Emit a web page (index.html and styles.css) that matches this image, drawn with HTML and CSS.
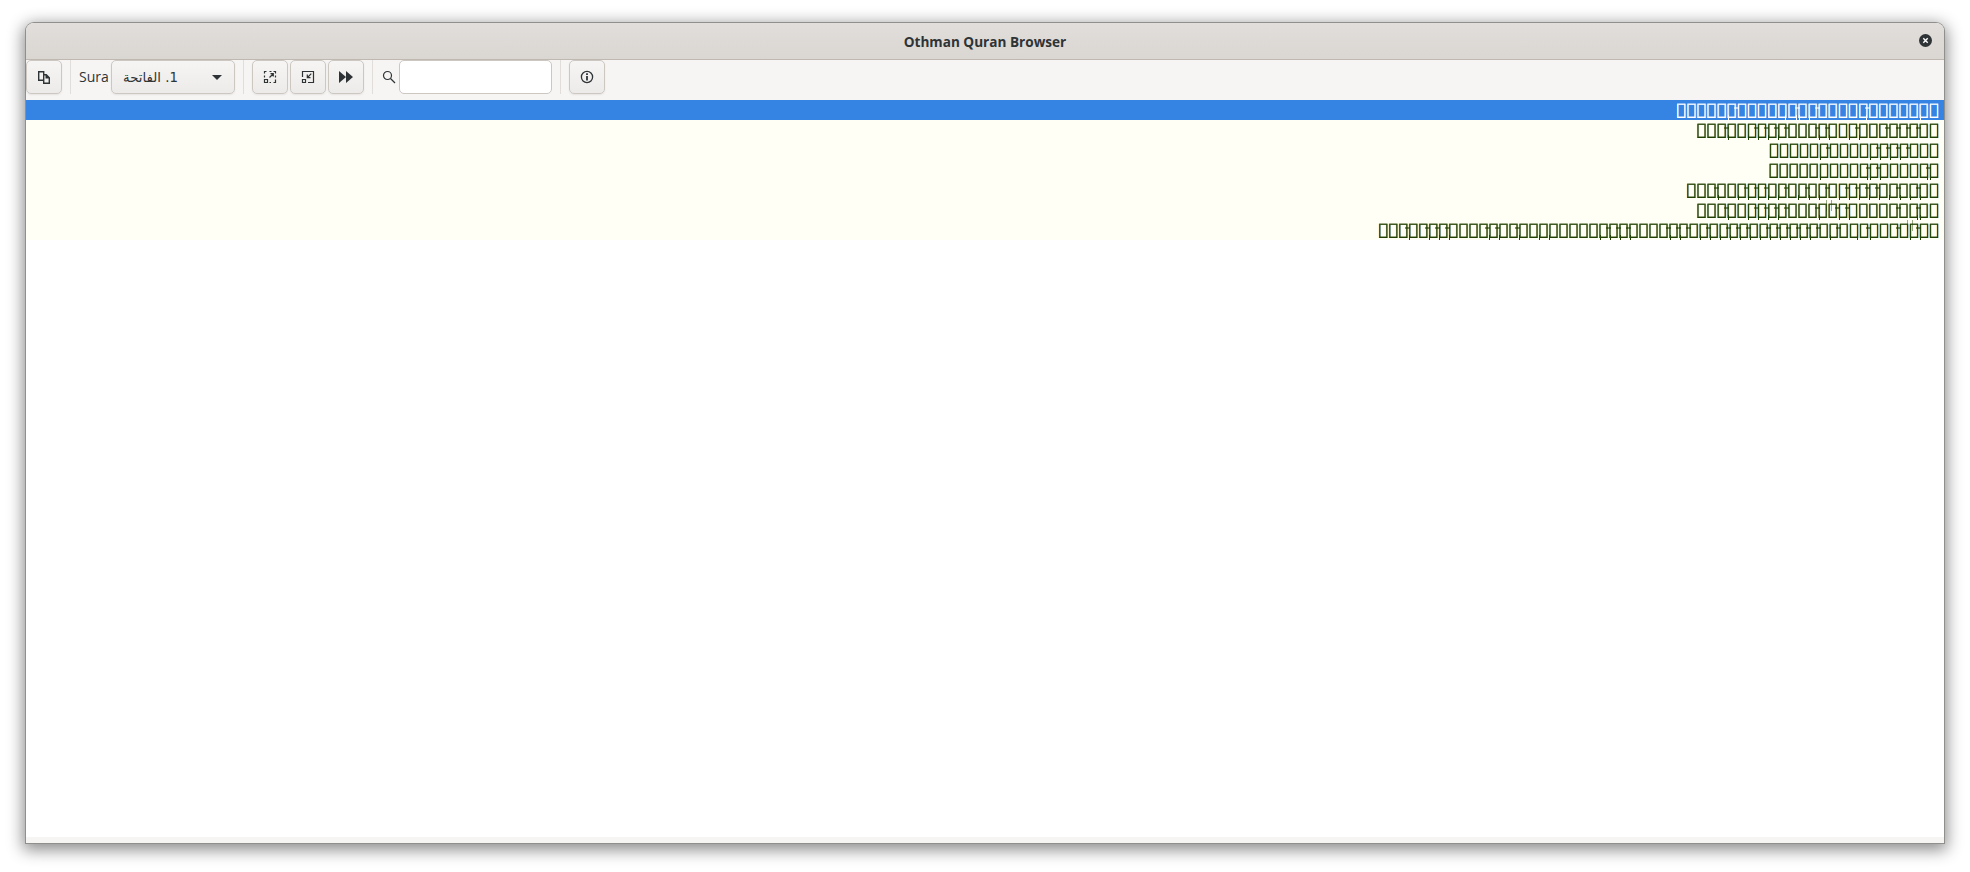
FILE: index.html
```html
<!DOCTYPE html>
<html lang="en">
<head>
<meta charset="utf-8">
<title>Othman Quran Browser</title>
<link rel="stylesheet" href="styles.css">
</head>
<body>
<div class="window">
  <header class="titlebar">
    <span class="title">Othman Quran Browser</span>
    <span class="close"><svg viewBox="0 0 13 13" width="13" height="13"><path d="M4.300 4.300l4.400 4.400M8.700 4.300l-4.400 4.400" stroke="#fff" stroke-width="1.400" fill="none"/></svg></span>
  </header>
  <nav class="toolbar">
    <button class="btn"><svg class="ico" viewBox="0 0 14 14"><path d="M1.700 1.700h5v8.600h-5zM6.700 4.700h2.600l3 3v5.600H6.700z" fill="none" stroke="#2e3436" stroke-width="1.400"/><path d="M8.500 4v4.500H13z" fill="#2e3436"/></svg></button>
    <span class="sep"></span>
    <span class="label">Sura</span>
    <button class="combo"><span class="combo-text" dir="rtl">1. الفاتحة</span><span class="arrow"></span></button>
    <span class="sep"></span>
    <button class="btn"><svg class="ico" viewBox="0 0 14 14"><path d="M1.500 9.500h3v3h-3z" fill="none" stroke="#2e3436" stroke-width="1.200"/><path d="M6.500 1.500h2M10.500 1.500h2v2M12.500 5.500v2M12.500 9.500v3h-2M8 12.500H6.500M1.500 7.500v-2M1.500 3.500v-2h2" fill="none" stroke="#2e3436" stroke-width="1.200"/><path d="M6.500 7.500L10 4M7.500 3.700h2.800v2.800" fill="none" stroke="#2e3436" stroke-width="1.200"/></svg></button>
    <button class="btn tight"><svg class="ico" viewBox="0 0 14 14"><path d="M1.500 9.500h3v3h-3z" fill="none" stroke="#2e3436" stroke-width="1.200"/><path d="M1.500 7V1.500h11v11H7" fill="none" stroke="#2e3436" stroke-width="1.200"/><path d="M10.300 3.700L6.500 7.500M6.300 4.500v3.200h3.200" fill="none" stroke="#2e3436" stroke-width="1.200"/></svg></button>
    <button class="btn tight"><svg class="ico" viewBox="0 0 14 14"><path d="M0 1l7 6-7 6zM7 1l7 6-7 6z" fill="#2e3436"/></svg></button>
    <span class="sep"></span>
    <svg class="search" viewBox="0 0 14 14"><circle cx="5.500" cy="5.500" r="4" fill="none" stroke="#2e3436" stroke-width="1.200"/><path d="M8.500 8.500l4.500 4.500" stroke="#2e3436" stroke-width="1.300"/></svg>
    <input class="entry" type="text">
    <span class="sep"></span>
    <button class="btn"><svg class="ico" viewBox="0 0 14 14"><circle cx="7" cy="7" r="5.600" fill="none" stroke="#2e3436" stroke-width="1.300"/><path d="M7 6v4.500M7 3.300v1.700" stroke="#2e3436" stroke-width="1.800"/></svg></button>
  </nav>
  <main class="list">
    <div class="row selected wide"><span class="txt">&#xE000;&#xE000;&#xE000;&#xE000;&#xE000;<b>&#xE000;</b><i></i>&#xE000;&#xE000;&#xE000;&#xE000;<u>&#xE000;</u><u>&#xE000;</u><i></i><b>&#xE000;</b><b>&#xE000;</b><i></i>&#xE000;&#xE000;&#xE000;&#xE000;<u>&#xE000;</u><i></i>&#xE000;&#xE000;&#xE000;&#xE000;&#xE000;<b>&#xE000;</b>&#xE000;</span></div>
    <div class="row wide"><span class="txt">&#xE000;&#xE000;&#xE000;<i></i><b>&#xE000;</b>&#xE000;<b>&#xE000;</b><i></i><b>&#xE000;</b><i></i><b>&#xE000;</b><i></i><b>&#xE000;</b><i></i>&#xE000;&#xE000;&#xE000;<i></i><b>&#xE000;</b><i></i><b>&#xE000;</b>&#xE000;<b>&#xE000;</b><i></i><b>&#xE000;</b>&#xE000;&#xE000;<i></i>&#xE000;<i></i>&#xE000;<i></i>&#xE000;<i></i>&#xE000;&#xE000;</span></div>
    <div class="row"><span class="txt">&#xE000;&#xE000;&#xE000;&#xE000;&#xE000;<b>&#xE000;</b><i></i>&#xE000;&#xE000;&#xE000;&#xE000;<b>&#xE000;</b><i></i><b>&#xE000;</b><i></i><b>&#xE000;</b><i></i><b>&#xE000;</b><i></i>&#xE000;&#xE000;&#xE000;</span></div>
    <div class="row"><span class="txt">&#xE000;&#xE000;&#xE000;&#xE000;&#xE000;<b>&#xE000;</b>&#xE000;&#xE000;&#xE000;<u>&#xE000;</u><i></i><b>&#xE000;</b><i></i><b>&#xE000;</b>&#xE000;&#xE000;&#xE000;<u>&#xE000;</u><i></i><b>&#xE000;</b></span></div>
    <div class="row wide"><span class="txt">&#xE000;&#xE000;&#xE000;<i></i><b>&#xE000;</b>&#xE000;<b>&#xE000;</b><i></i><b>&#xE000;</b><i></i><b>&#xE000;</b><i></i><b>&#xE000;</b><b>&#xE000;</b><i></i>&#xE000;<b>&#xE000;</b><i></i><b>&#xE000;</b><b>&#xE000;</b><i></i>&#xE000;<b>&#xE000;</b><i></i><b>&#xE000;</b><i></i><b>&#xE000;</b><i></i><b>&#xE000;</b><i></i><b>&#xE000;</b><b>&#xE000;</b><i></i><b>&#xE000;</b><b>&#xE000;</b><i></i><b>&#xE000;</b>&#xE000;</span></div>
    <div class="row wide"><span class="txt">&#xE000;&#xE000;&#xE000;<i></i><b>&#xE000;</b>&#xE000;<b>&#xE000;</b><i></i><b>&#xE000;</b><i></i><b>&#xE000;</b><i></i><b>&#xE000;</b><i></i>&#xE000;&#xE000;&#xE000;<i></i><b>&#xE000;</b><s></s>&#xE000;<i></i><b>&#xE000;</b><i></i><b>&#xE000;</b>&#xE000;&#xE000;&#xE000;&#xE000;<i></i>&#xE000;<u>&#xE000;</u><i></i><b>&#xE000;</b>&#xE000;</span></div>
    <div class="row"><span class="txt">&#xE000;&#xE000;&#xE000;<i></i><b>&#xE000;</b>&#xE000;<i></i><b>&#xE000;</b><i></i><b>&#xE000;</b><i></i><b>&#xE000;</b>&#xE000;&#xE000;&#xE000;<i></i><b>&#xE000;</b><i></i><b>&#xE000;</b>&#xE000;<i></i><b>&#xE000;</b>&#xE000;<b>&#xE000;</b><b>&#xE000;</b>&#xE000;&#xE000;&#xE000;&#xE000;<b>&#xE000;</b><i></i><b>&#xE000;</b><i></i><b>&#xE000;</b><i></i><b>&#xE000;</b>&#xE000;&#xE000;&#xE000;<i></i><b>&#xE000;</b><i></i><b>&#xE000;</b><i></i>&#xE000;<b>&#xE000;</b><i></i><b>&#xE000;</b><b>&#xE000;</b><i></i><b>&#xE000;</b><i></i><b>&#xE000;</b><i></i><b>&#xE000;</b><b>&#xE000;</b><i></i><b>&#xE000;</b><i></i><b>&#xE000;</b><i></i><b>&#xE000;</b><i></i><b>&#xE000;</b><i></i><b>&#xE000;</b><i></i>&#xE000;<b>&#xE000;</b><i></i>&#xE000;<u>&#xE000;</u>&#xE000;<i></i><b>&#xE000;</b>&#xE000;&#xE000;<i></i>&#xE000;<s></s><b>&#xE000;</b><i></i><b>&#xE000;</b>&#xE000;</span></div>
  </main>
  <footer class="statusbar"></footer>
</div>
</body>
</html>
```
FILE: styles.css
```css
* { box-sizing: border-box; }
html, body { margin: 0; height: 100%; background: #fff; }
body { padding: 23px 26px 29px 26px; font-family: "Open Sans", "Noto Sans", sans-serif; color: #2e3436; overflow: hidden; }
.window { height: 820px; width: 1918px; display: flex; flex-direction: column; background: #fff; border-radius: 8px 8px 0 0; box-shadow: 0 0 0 1px #8f8f8c, 0 4px 16px 3px rgba(0,0,0,.45); }
.titlebar { height: 37px; flex: none; position: relative; display: flex; align-items: center; justify-content: center; background: linear-gradient(#e1dedb, #dad6d2); border-bottom: 1px solid #bfb8b1; border-radius: 8px 8px 0 0; }
.title { font-size: 13.600px; font-weight: 700; color: #2e3436; }
.close { position: absolute; right: 12px; top: 11px; width: 13px; height: 13px; border-radius: 50%; background: #2e3436; display: flex; }
.toolbar { height: 40px; flex: none; display: flex; align-items: flex-start; background: #f6f5f4; }
.btn { width: 36px; height: 34px; padding: 0; flex: none; display: flex; align-items: center; justify-content: center; border: 1px solid #cdc7c2; border-radius: 5px; background: linear-gradient(#f6f5f4, #edebe9); box-shadow: 0 1px 2px rgba(0,0,0,.07); }
.tight { margin-left: 2px; }
.ico { width: 14px; height: 14px; }
.sep { width: 1px; height: 34px; flex: none; background: #e0dddb; margin: 0 8px; }
.label { width: 29px; font-size: 14px; line-height: 33px; margin-right: 3px; }
.combo { width: 124px; height: 34px; flex: none; padding: 0 12px 0 11px; display: flex; align-items: center; justify-content: space-between; border: 1px solid #cdc7c2; border-radius: 5px; background: linear-gradient(#f6f5f4, #edebe9); box-shadow: 0 1px 2px rgba(0,0,0,.07); color: #2e3436; font: 13.300px "DejaVu Sans", sans-serif; }
.arrow { border: 5px solid transparent; border-top: 5px solid #2e3436; border-bottom: 0; }
.search { width: 14px; height: 14px; flex: none; margin: 10px 3px 0 1px; }
.entry { width: 153px; height: 34px; flex: none; border: 1px solid #cdc7c2; border-radius: 5px; background: #fff; }
.list { flex: 1; }
.row { --ink: #1f4000; height: 20px; line-height: 20px; font-size: 16px; letter-spacing: .4px; font-family: "DejaVu Sans", sans-serif; background: #fffff5; text-align: right; padding-right: 5px; white-space: nowrap; }
.row.wide { letter-spacing: .5px; }
.txt, .txt b, .txt u { color: transparent; background: var(--ink); -webkit-background-clip: text; background-clip: text; -webkit-text-stroke: .3px var(--ink); }
.row b, .row u { position: relative; font-weight: 400; text-decoration: none; }
.row b::after, .row u::after { content: ""; position: absolute; top: 15px; width: 1px; height: 5px; background: var(--ink); }
.row b::after { left: 1px; }
.row u::after { right: 1px; }
.row i, .row s { display: inline-block; width: 0; height: 0; position: relative; }
.row i::after { content: ""; position: absolute; left: -3px; top: -8px; width: 5px; height: 2px; background: var(--ink); opacity: .55; }
.row s::after { content: ""; position: absolute; left: -2px; top: -15px; width: 4px; height: 11px; border: solid var(--ink); border-width: 0 1px; opacity: .45; }
.selected { --ink: #fff; background: #3584e4; }
.statusbar { height: 6px; flex: none; background: #f6f5f4; }
```
